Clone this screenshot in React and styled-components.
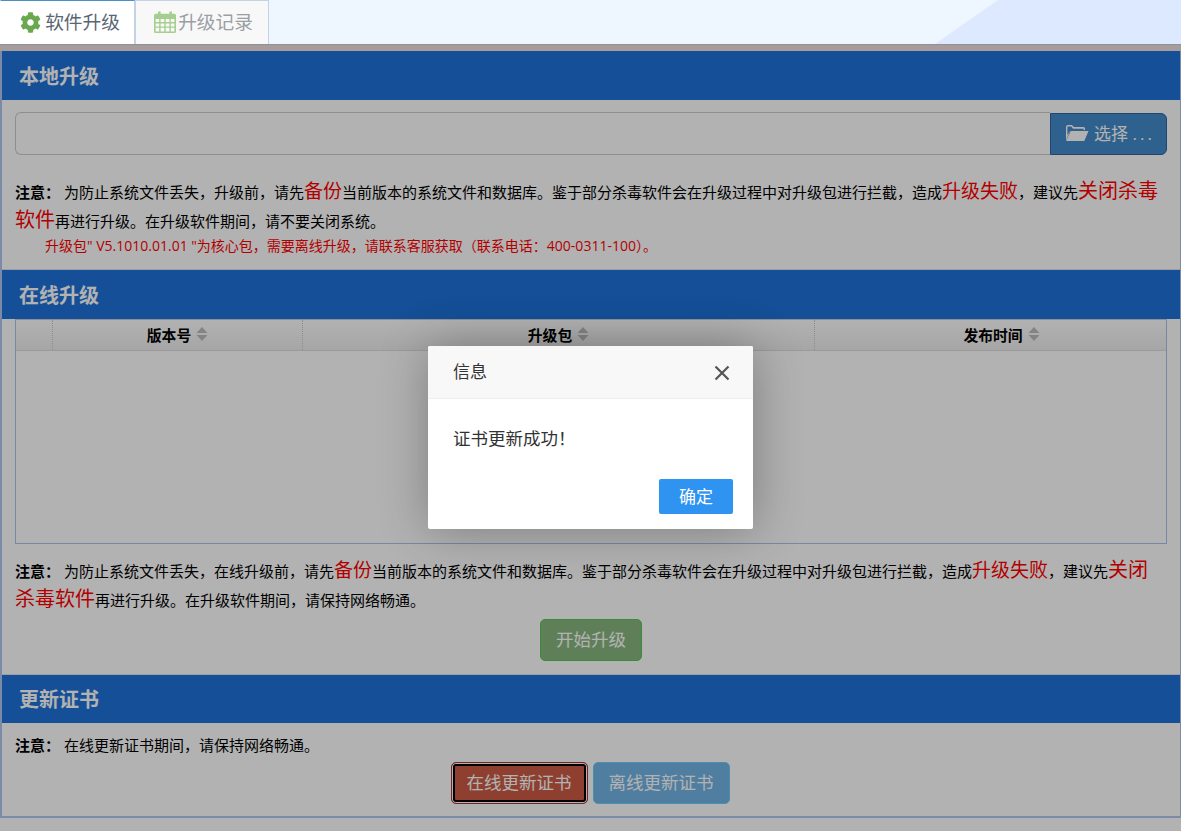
import React from "react";
import styled, { createGlobalStyle } from "styled-components";
import { FaCog } from "react-icons/fa";

const cjk = `"Open Sans", "Noto Sans CJK SC", sans-serif`;

const Global = createGlobalStyle`
  html, body { margin: 0; padding: 0; background: #fff; }
  body { font-family: ${cjk}; color: #000; overflow: hidden; }
  * { box-sizing: border-box; }
`;

const Page = styled.div`
  position: relative;
  height: 831px;
  overflow: hidden;
  background: #fff;
`;

const TabBar = styled.div`
  position: relative;
  display: flex;
  height: 44px;
  background: #eef6ff;
  overflow: hidden;
  &::after {
    content: "";
    position: absolute;
    inset: 0;
    background: #dde9fe;
    clip-path: polygon(935px 44px, 998px 0, 100% 0, 100% 100%);
  }
`;

const Tab = styled.div`
  display: flex;
  align-items: center;
  justify-content: center;
  gap: ${(p) => (p.$active ? "4px" : "1px")};
  width: ${(p) => (p.$active ? "135px" : "134px")};
  height: 44px;
  padding: ${(p) => (p.$active ? "0 0 1px 5px" : "0 0 1px 2px")};
  font-size: 18.7px;
  color: ${(p) => (p.$active ? "#5a6673" : "#9a9fa5")};
  background: ${(p) => (p.$active ? "#fff" : "#f8f8f8")};
  border: 1px solid #c3d3e6;
  border-left-color: ${(p) => (p.$active ? "#fff" : "#c3d3e6")};
  border-top: ${(p) => (p.$active ? "1px solid #4a90c8" : "1px solid #c3d3e6")};
  border-bottom: 0;
  position: relative;
  z-index: 1;
`;

const TabLabel = styled.span`
  position: relative;
  top: -2px;
`;

const Strip = styled.div`
  height: 7px;
  background: #f0dede;
  border-top: 1px solid #c8d2e0;
`;

const Panel = styled.div`
  height: 767px;
  border: 2px solid #b0c8f0;
  border-top: 0;
  border-right-width: 1px;
  background: #fff;
`;

const Section = styled.section`
  height: ${(p) => p.$h}px;
`;

const Divided = styled(Section)`
  border-top: 1px solid #dfe3ea;
`;

const Head = styled.h2`
  margin: 0;
  height: ${(p) => p.$h || 49}px;
  padding-left: 17px;
  background: #1e71d9;
  color: #fff;
  font-size: 20px;
  font-weight: 700;
  line-height: ${(p) => (p.$h || 49) + 2}px;
`;

const Body = styled.div`
  padding: 0 13px;
`;

const FileRow = styled.div`
  display: flex;
  height: 43px;
  margin-top: 12px;
`;

const FileInput = styled.div`
  flex: 1;
  border: 1px solid #ccc;
  border-right: 0;
  border-radius: 6px 0 0 6px;
  background: #fff;
`;

const FileBtn = styled.div`
  width: 117px;
  margin-top: 1px;
  padding: 0 0 3px;
  display: flex;
  align-items: center;
  justify-content: center;
  gap: 5px;
  border: 1px solid #30639c;
  border-radius: 0 6px 6px 0;
  background: #428bca;
  color: #fff;
  font-size: 17px;
  white-space: nowrap;
`;

const Dots = styled.span`
  letter-spacing: 3px;
  margin-right: -3px;
`;

const Note = styled.p`
  margin: ${(p) => p.$mt || 0}px 3px 0 0;
  font-size: 15px;
  line-height: 29px;
`;

const NoteLabel = styled.b`
  font-weight: 700;
  margin-right: 4px;
`;

const Big = styled.span`
  color: #ff0000;
  font-size: ${(p) => p.$size || 19}px;
  line-height: 1;
`;

const Warn = styled.p`
  margin: 0;
  padding-left: 30px;
  color: #ff0000;
  font-size: 14px;
  line-height: 20px;
`;

const Table = styled.div`
  height: 225px;
  border: 1px solid #a8c4f0;
  border-top-color: #ccd;
`;

const THead = styled.div`
  display: grid;
  grid-template-columns: 36px 250px 512px 1fr;
  height: 31px;
  background: linear-gradient(#fff, #eee);
  border-bottom: 1px solid #ddd;
`;

const Th = styled.div`
  display: flex;
  align-items: center;
  justify-content: center;
  gap: 5px;
  padding: 0 0 2px ${(p) => p.$shift || 0}px;
  font-size: 14.8px;
  font-weight: 700;
  border-left: ${(p) => (p.$first ? "0" : "1px dotted #ccc")};
`;

const Center = styled.div`
  display: flex;
  justify-content: center;
  gap: 5px;
  margin-top: ${(p) => p.$mt}px;
  padding-right: ${(p) => p.$pr || 0}px;
`;

const Btn = styled.button`
  font-family: inherit;
  font-size: 17.5px;
  color: #fff;
  height: 42px;
  padding: 0 15px 4px;
  border-radius: 5px;
  border: 1px solid ${(p) => p.$border};
  background: ${(p) => p.$bg};
  ${(p) => p.$focus && "box-shadow: inset 0 0 0 1px #fff, inset 0 0 0 3px #000;"}
`;

const Shade = styled.div`
  position: absolute;
  inset: 44px 0 0 0;
  background: rgba(0, 0, 0, 0.3);
`;

const Dialog = styled.div`
  position: absolute;
  left: 428px;
  top: 346px;
  width: 325px;
  height: 183px;
  background: #fff;
  border-radius: 2px;
  box-shadow: 1px 1px 50px rgba(0, 0, 0, 0.3);
  color: #333;
  overflow: hidden;
`;

const DialogHead = styled.div`
  display: flex;
  align-items: center;
  justify-content: space-between;
  height: 53px;
  padding: 1px 23px 0 25px;
  background: #f8f8f8;
  border-bottom: 1px solid #eee;
  font-size: 17px;
`;

const DialogTitle = styled.span`
  position: relative;
  top: -2px;
`;

const DialogBody = styled.div`
  padding: 27px 25px 0;
  font-size: 17.5px;
  line-height: 24px;
  height: 80px;
`;

const DialogFoot = styled.div`
  display: flex;
  justify-content: flex-end;
  padding-right: 20px;
`;

const OkBtn = styled.button`
  width: 74px;
  height: 35px;
  padding: 0 0 3px;
  border: 0;
  border-radius: 2px;
  background: #2e93f1;
  color: #fff;
  font-family: inherit;
  font-size: 17px;
`;

const Calendar = () => (
  <svg width="24" height="24" viewBox="0 0 24 24" fill="#a5cf8f">
    <path fillRule="evenodd" d="M5 1.500h2.600v2.200H16.400V1.500H19v2.200h2.500A1.500 1.500 0 0 1 23 5.200V21.500A1.500 1.500 0 0 1 21.500 23h-19A1.500 1.500 0 0 1 1 21.500V5.200A1.500 1.500 0 0 1 2.500 3.700H5zM2.600 9v3h3.600V9zm5 0v3h3.700V9zm5.100 0v3h3.700V9zm5.100 0v3h3.600V9zM2.600 13.400v3h3.600v-3zm5 0v3h3.700v-3zm5.100 0v3h3.700v-3zm5.100 0v3h3.600v-3zM2.600 17.800v3.600h3.600v-3.600zm5 0v3.600h3.700v-3.600zm5.100 0v3.600h3.700v-3.600zm5.100 0v3.600h3.600v-3.600z" />
  </svg>
);

const FolderOpen = () => (
  <svg width="24" height="18" viewBox="0 0 24 18" fill="#fff">
    <path d="M1 16.500V3a2 2 0 0 1 2-2h4l1.800 2H18.500a1.500 1.500 0 0 1 1.500 1.500V6h-1.400V4.800H8L6.300 2.600H3.100A.7.700 0 0 0 2.400 3.300V11L5.500 6z" />
    <path d="M5.800 7H23.500L19.300 17H1z" />
  </svg>
);

const SortIcon = () => (
  <svg width="12" height="16" viewBox="0 0 12 16" fill="#bdbdbd">
    <path d="M6 1l5.500 6H.5zM6 15L.5 9h11z" />
  </svg>
);

const Close = () => (
  <svg width="16" height="16" viewBox="0 0 16 16" stroke="#555" strokeWidth="2.200" fill="none">
    <path d="M1.500 1.500l13 13M14.500 1.500l-13 13" />
  </svg>
);

export default function App() {
  return (
    <Page>
      <Global />
      <TabBar>
        <Tab $active>
          <FaCog color="#6aa84f" size={21} />
          <TabLabel>软件升级</TabLabel>
        </Tab>
        <Tab>
          <Calendar />
          <TabLabel>升级记录</TabLabel>
        </Tab>
      </TabBar>
      <Strip />
      <Panel>
        <Section $h={218}>
          <Head>本地升级</Head>
          <Body>
            <FileRow>
              <FileInput />
              <FileBtn>
                <FolderOpen />
                <span>选择 <Dots>...</Dots></span>
              </FileBtn>
            </FileRow>
            <Note $mt={23}>
              <NoteLabel>注意：</NoteLabel>为防止系统文件丢失，升级前，请先<Big>备份</Big>当前版本的系统文件和数据库。鉴于部分杀毒软件会在升级过程中对升级包进行拦截，造成<Big>升级失败</Big>，建议先<Big $size={20}>关闭杀毒软件</Big>再进行升级。在升级软件期间，请不要关闭系统。
            </Note>
            <Warn>升级包" V5.1010.01.01 "为核心包，需要离线升级，请联系客服获取（联系电话：400-0311-100）。</Warn>
          </Body>
        </Section>
        <Divided $h={405}>
          <Head>在线升级</Head>
          <Body>
            <Table>
              <THead>
                <Th $first />
                <Th>版本号 <SortIcon /></Th>
                <Th>升级包 <SortIcon /></Th>
                <Th $shift={22}>发布时间 <SortIcon /></Th>
              </THead>
            </Table>
            <Note $mt={13}>
              <NoteLabel>注意：</NoteLabel>为防止系统文件丢失，在线升级前，请先<Big>备份</Big>当前版本的系统文件和数据库。鉴于部分杀毒软件会在升级过程中对升级包进行拦截，造成<Big>升级失败</Big>，建议先<Big $size={20}>关闭杀毒软件</Big>再进行升级。在升级软件期间，请保持网络畅通。
            </Note>
            <Center $mt={4}>
              <Btn $bg="#89b77f" $border="#5ac55a">开始升级</Btn>
            </Center>
          </Body>
        </Divided>
        <Divided $h={144}>
          <Head $h={48}>更新证书</Head>
          <Body>
            <Note $mt={8}>
              <NoteLabel>注意：</NoteLabel>在线更新证书期间，请保持网络畅通。
            </Note>
            <Center $mt={2} $pr={2}>
              <Btn $focus $bg="#cc5b45" $border="#a33">在线更新证书</Btn>
              <Btn $bg="#71b5e5" $border="#6aceF9">离线更新证书</Btn>
            </Center>
          </Body>
        </Divided>
      </Panel>
      <Shade />
      <Dialog>
        <DialogHead>
          <DialogTitle>信息</DialogTitle>
          <Close />
        </DialogHead>
        <DialogBody>证书更新成功！</DialogBody>
        <DialogFoot>
          <OkBtn>确定</OkBtn>
        </DialogFoot>
      </Dialog>
    </Page>
  );
}
